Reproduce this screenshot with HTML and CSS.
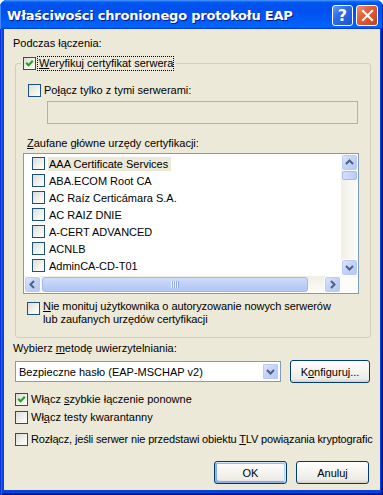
FILE: index.html
```html
<!DOCTYPE html>
<html lang="pl">
<head>
<meta charset="utf-8">
<title>Właściwości chronionego protokołu EAP</title>
<link rel="stylesheet" href="styles.css">
</head>
<body>
<div class="window">
  <div class="titlebar">
    <span class="title">Właściwości chronionego protokołu EAP</span>
    <span class="tb-btn help">?</span>
    <span class="tb-btn close"><svg width="13" height="13" viewBox="0 0 13 13"><path d="M2 2 L11 11 M11 2 L2 11" stroke="#fff" stroke-width="2.2" stroke-linecap="square"/></svg></span>
  </div>
  <div class="frame">
    <div class="client">
      <div class="text lbl-top">Podczas łączenia:</div>
      <fieldset class="group">
        <legend class="legend"><span class="cb"><svg class="ck" viewBox="0 0 11 11"><path d="M2.2 4.8 L4.5 7.2 L8.8 2.8"/></svg></span><span class="focus"><u>W</u>eryfikuj certyfikat serwera</span></legend>
        <div class="row r-connect"><span class="cb"></span><span class="txt">Po<u>ł</u>ącz tylko z tymi serwerami:</span></div>
        <div class="edit"></div>
        <div class="text lbl-trust"><u>Z</u>aufane główne urzędy certyfikacji:</div>
        <div class="listbox">
          <div class="list-main">
            <div class="items">
              <div class="item"><span class="cb"></span><span class="itxt sel">AAA Certificate Services</span></div>
              <div class="item"><span class="cb"></span><span class="itxt">ABA.ECOM Root CA</span></div>
              <div class="item"><span class="cb"></span><span class="itxt">AC Raíz Certicámara S.A.</span></div>
              <div class="item"><span class="cb"></span><span class="itxt">AC RAIZ DNIE</span></div>
              <div class="item"><span class="cb"></span><span class="itxt">A-CERT ADVANCED</span></div>
              <div class="item"><span class="cb"></span><span class="itxt">ACNLB</span></div>
              <div class="item"><span class="cb"></span><span class="itxt">AdminCA-CD-T01</span></div>
            </div>
            <div class="vscroll">
              <span class="sb-btn"><svg width="15" height="15" viewBox="0 0 15 15"><path d="M4 9 L7.5 5.5 L11 9" class="arr"/></svg></span>
              <span class="vthumb"></span>
              <span class="vtrack"></span>
              <span class="sb-btn"><svg width="15" height="15" viewBox="0 0 15 15"><path d="M4 6 L7.5 9.5 L11 6" class="arr"/></svg></span>
            </div>
          </div>
          <div class="hrow">
            <div class="hscroll">
              <span class="sb-btn"><svg width="15" height="15" viewBox="0 0 15 15"><path d="M9 4 L5.5 7.5 L9 11" class="arr"/></svg></span>
              <span class="hthumb"><span class="grip"></span></span>
              <span class="htrack"></span>
              <span class="sb-btn"><svg width="15" height="15" viewBox="0 0 15 15"><path d="M6 4 L9.5 7.5 L6 11" class="arr"/></svg></span>
            </div>
            <div class="corner"></div>
          </div>
        </div>
        <div class="row r-prompt"><span class="cb"></span><span class="txt"><u>N</u>ie monituj użytkownika o autoryzowanie nowych serwerów<br>lub zaufanych urzędów certyfikacji</span></div>
      </fieldset>
      <div class="text lbl-method">Wybierz <u>m</u>etodę uwierzytelniania:</div>
      <div class="combo-row">
        <div class="combo">
          <span class="combo-text">Bezpieczne hasło (EAP-MSCHAP v2)</span>
          <span class="combo-btn"><svg width="15" height="15" viewBox="0 0 15 15"><path d="M4 6 L7.5 9.5 L11 6" class="arr"/></svg></span>
        </div>
        <span class="btn btn-config">K<u>o</u>nfiguruj...</span>
      </div>
      <div class="row opt opt1"><span class="cb"><svg class="ck" viewBox="0 0 11 11"><path d="M2.2 4.8 L4.5 7.2 L8.8 2.8"/></svg></span><span class="txt">Włącz <u>s</u>zybkie łączenie ponowne</span></div>
      <div class="row opt opt2"><span class="cb"></span><span class="txt">Wł<u>ą</u>cz testy kwarantanny</span></div>
      <div class="row opt opt3"><span class="cb"></span><span class="txt">Rozłącz, jeśli serwer nie przedstawi obiektu <u>T</u>LV powiązania kryptografic</span></div>
      <div class="btn-row">
        <span class="btn btn-default">OK</span>
        <span class="btn">Anuluj</span>
      </div>
    </div>
  </div>
</div>
</body>
</html>
```
FILE: styles.css
```css
html, body {
  margin: 0;
  padding: 0;
  background: #ffffff;
}

.window {
  width: 383px;
  height: 495px;
  display: flex;
  flex-direction: column;
  font-family: "Liberation Sans", Arial, sans-serif;
  font-size: 11px;
  color: #000;
  border-radius: 7px 7px 0 0;
  overflow: hidden;
  background: #0842d6;
}

.titlebar {
  height: 29px;
  flex: none;
  box-sizing: border-box;
  display: flex;
  align-items: center;
  padding: 2px 5px 0 7px;
  background: linear-gradient(180deg, #0997ff 0%, #0053ee 10%, #0050ee 40%, #0062fc 86%, #0066ff 92%, #005bff 95%, #003dd7 97%, #003dd7 100%);
  box-shadow: inset 1px 1px #3d8bff, inset -1px 0 #0030b8;
}

.title {
  flex: 1;
  color: #fff;
  font-family: "DejaVu Sans", "Liberation Sans", sans-serif;
  font-weight: bold;
  font-size: 13px;
  letter-spacing: -0.2px;
  text-shadow: 1px 1px #0a1883;
  white-space: nowrap;
}

.tb-btn {
  width: 21px;
  height: 21px;
  box-sizing: border-box;
  border: 1px solid #fff;
  border-radius: 3px;
  display: flex;
  align-items: center;
  justify-content: center;
}

.help {
  margin-right: 3px;
  color: #fff;
  font-weight: bold;
  font-size: 16px;
  font-family: "DejaVu Sans", sans-serif;
  background: linear-gradient(135deg, #6d9cf7 0%, #2e6be8 40%, #1a52d8 100%);
}

.close {
  width: 22px;
  background: linear-gradient(135deg, #f0927a 0%, #e35d35 40%, #c7421b 100%);
}

.frame {
  flex: 1;
  display: flex;
  padding: 0 3px 5px 4px;
  background: #0842d6;
  box-shadow: inset 1px 0 #0831d9, inset 2px 0 #166aee, inset -1px -1px #00138c, inset -2px -2px #001ea0;
}

.client {
  flex: 1;
  background: #ece9d8;
  padding-left: 9px;
  display: flex;
  flex-direction: column;
  align-items: flex-start;
}

.text {
  line-height: 13px;
  height: 13px;
  white-space: nowrap;
}

.lbl-top {
  margin-top: 8px;
}

u {
  text-decoration: underline;
  text-underline-offset: 1px;
}

/* checkbox */
.cb {
  width: 13px;
  height: 13px;
  flex: none;
  box-sizing: border-box;
  border: 1px solid #1c5180;
  background: linear-gradient(135deg, #dcdcd7 0%, #f3f3ef 60%, #ffffff 100%);
  display: flex;
}

.ck {
  width: 11px;
  height: 11px;
}

.ck path {
  fill: none;
  stroke: #21a121;
  stroke-width: 2.2;
}

/* group box */
.group {
  margin: 6px 0 0 2px;
  width: 356px;
  box-sizing: border-box;
  border: 1px solid #d0d0bf;
  border-radius: 3px;
  padding: 0 0 11px 0;
  display: flex;
  flex-direction: column;
  align-items: flex-start;
  min-inline-size: 0;
}

.legend {
  margin-left: 5px;
  padding: 0 2px;
  height: 15px;
  display: flex;
  align-items: center;
}

.legend .cb {
  margin-right: 1px;
}

.focus {
  border: 1px dotted #000;
  padding: 0 0 0 1px;
  line-height: 13px;
  height: 13px;
  white-space: nowrap;
}

.row {
  display: flex;
  align-items: center;
  line-height: 13px;
  white-space: nowrap;
}

.row .txt {
  margin-left: 3px;
}

.r-connect {
  margin: 13px 0 0 12px;
}

.edit {
  margin: 4px 0 0 31px;
  width: 311px;
  height: 23px;
  box-sizing: border-box;
  border: 1px solid #a7b3c4;
  background: #ece9d8;
}

.lbl-trust {
  margin: 13px 0 0 11px;
}

/* list box */
.listbox {
  margin: 3px 0 0 7px;
  width: 336px;
  height: 141px;
  box-sizing: border-box;
  border: 1px solid #7f9db9;
  background: #fff;
  display: flex;
  flex-direction: column;
}

.list-main {
  flex: 1;
  display: flex;
  min-height: 0;
}

.items {
  flex: 1;
  overflow: hidden;
  padding-top: 1px;
}

.item {
  height: 17px;
  display: flex;
  align-items: center;
  padding-left: 8px;
  white-space: nowrap;
}

.itxt {
  margin-left: 3px;
  padding: 0 3px 0 1px;
  line-height: 14px;
  height: 14px;
}

.itxt.sel {
  background: #ece9d8;
}

.vscroll {
  width: 17px;
  flex: none;
  display: flex;
  flex-direction: column;
  background: linear-gradient(90deg, #f1efe6 0%, #fcfcfa 100%);
}

.hrow {
  height: 17px;
  flex: none;
  display: flex;
}

.hscroll {
  flex: 1;
  display: flex;
  background: linear-gradient(180deg, #f1efe6 0%, #fcfcfa 100%);
}

.corner {
  width: 17px;
  background: #fcfcfa;
}

.sb-btn {
  width: 17px;
  height: 17px;
  flex: none;
  box-sizing: border-box;
  border: 1px solid #fff;
  border-radius: 3px;
  background: linear-gradient(135deg, #dfe8fd 0%, #c4d4f9 45%, #b4c7f3 100%);
  box-shadow: inset 0 0 0 1px #b9cbf5;
  display: flex;
  align-items: center;
  justify-content: center;
}

.arr {
  fill: none;
  stroke: #4d6185;
  stroke-width: 2;
}

.vthumb {
  height: 9px;
  margin: 0 1px;
  box-sizing: border-box;
  border: 1px solid #a3b8ef;
  border-radius: 2px;
  background: linear-gradient(90deg, #d2defc 0%, #bccef8 100%);
}

.vtrack {
  flex: 1;
}

.htrack {
  flex: 1;
}

.hthumb {
  width: 266px;
  margin: 1px 0 1px 1px;
  box-sizing: border-box;
  border: 1px solid #a3b8ef;
  border-radius: 3px;
  background: linear-gradient(180deg, #cfdcfc 0%, #bccef8 60%, #b2c6f5 100%);
  display: flex;
  align-items: center;
  justify-content: center;
}

.grip {
  width: 8px;
  height: 7px;
  background: repeating-linear-gradient(90deg, #eef3fe 0 1px, #8fa9e8 1px 2px);
}

.r-prompt {
  margin: 6px 0 0 11px;
  align-items: flex-start;
}

.r-prompt .txt {
  letter-spacing: -0.07px;
}

.r-prompt .cb {
  margin-top: 2px;
}

.lbl-method {
  margin: 4px 0 0 0;
}

.combo-row {
  margin: 5px 0 0 2px;
  height: 23px;
  display: flex;
  align-items: center;
}

.combo {
  width: 266px;
  height: 21px;
  box-sizing: border-box;
  border: 1px solid #7f9db9;
  background: #fff;
  display: flex;
  align-items: center;
  padding: 1px;
}

.combo-text {
  flex: 1;
  padding-left: 2px;
  white-space: nowrap;
}

.combo-btn {
  width: 17px;
  height: 17px;
  box-sizing: border-box;
  border: 1px solid #fff;
  border-radius: 2px;
  background: linear-gradient(135deg, #dfe8fd 0%, #c4d4f9 45%, #b4c7f3 100%);
  box-shadow: inset 0 0 0 1px #b9cbf5;
  display: flex;
  align-items: center;
  justify-content: center;
}

.btn {
  height: 23px;
  box-sizing: border-box;
  border: 1px solid #003c74;
  border-radius: 3px;
  background: linear-gradient(180deg, #ffffff 0%, #f4f3ee 50%, #ecebe6 85%, #d6d0c5 100%);
  display: flex;
  align-items: center;
  justify-content: center;
  width: 73px;
}

.btn-config {
  margin-left: 9px;
  width: 80px;
}

.btn-default {
  box-shadow: inset -1px 1px #cee7ff, inset 1px 2px #98b8ea, inset -2px 2px #bcd4f6, inset 1px -1px #89ade4, inset 2px -2px #89ade4;
}

.opt {
  margin-left: 2px;
  height: 13px;
}

.opt1 {
  margin-top: 10px;
}

.opt2 {
  margin-top: 5px;
}

.opt3 {
  margin-top: 9px;
}

.opt3 .txt {
  letter-spacing: -0.15px;
}

.btn-row {
  margin-top: 15px;
  align-self: stretch;
  display: flex;
  justify-content: flex-end;
  gap: 9px;
  padding-right: 11px;
}
```
